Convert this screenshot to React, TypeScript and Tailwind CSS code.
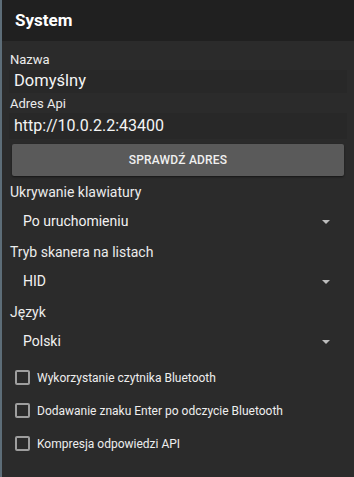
function Select({ value }: { value: string }) {
  return (
    <div className="flex h-[32px] items-center justify-between pl-[14px] pr-[17px] text-[14px] text-[#f2f2f2]">
      <span>{value}</span>
      <svg width="8" height="4" viewBox="0 0 8 4" className="mt-[1px]">
        <path d="M0 0 L8 0 L4 4 Z" fill="#bdbdbd" />
      </svg>
    </div>
  );
}

function Check({ label }: { label: string }) {
  return (
    <div className="flex h-[33px] items-center gap-[7px] pl-[13px] text-[12px] text-[#eeeeee]">
      <div className="h-[15px] w-[15px] rounded-[2px] border-2 border-[#9e9e9e]" />
      <span>{label}</span>
    </div>
  );
}

export default function App() {
  return (
    <div
      className="flex h-[477px] w-[354px] flex-col border-l-2 border-[#5d6d78] bg-[#2b2b2b]"
      style={{ fontFamily: 'Roboto, "Liberation Sans", sans-serif' }}
    >
      {/* header */}
      <div className="flex h-[41px] shrink-0 items-center bg-[#202020] pl-[13px]">
        <span className="text-[17px] font-bold text-white">System</span>
      </div>

      <div className="flex flex-col px-[7px] pt-[9px]">
        <label className="h-[20px] pl-[1px] text-[13px] leading-[20px] text-[#ececec]">Nazwa</label>
        <div className="flex h-[23px] items-center bg-[#282828] pl-[5px] text-[16.5px] text-[#f4f4f4]">Domyślny</div>
        <label className="mt-[1px] h-[19px] pl-[1px] text-[13px] leading-[19px] text-[#ececec]">Adres Api</label>
        <div className="flex h-[26px] items-center bg-[#282828] pl-[5px] text-[16px] text-[#f4f4f4]">http://10.0.2.2:43400</div>

        <button
          type="button"
          className="mx-[3px] mt-[5px] h-[32px] rounded-[2px] bg-[#5a5a5a] text-[12px] font-medium tracking-[0.2px] text-[#f0f0f0] shadow-[0_1px_2px_rgba(0,0,0,0.5)]"
        >
          SPRAWDŹ ADRES
        </button>

        <div className="mt-[3px] flex flex-col">
          <label className="h-[26px] pl-[1px] text-[14px] leading-[26px] text-[#ececec]">Ukrywanie klawiatury</label>
          <Select value="Po uruchomieniu" />
          <label className="mt-[2px] h-[26px] pl-[1px] text-[14px] leading-[26px] text-[#ececec]">Tryb skanera na listach</label>
          <Select value="HID" />
          <label className="mt-[2px] h-[26px] pl-[1px] text-[14px] leading-[26px] text-[#ececec]">Język</label>
          <Select value="Polski" />
        </div>
      </div>

      <div className="mt-[4px] flex flex-col">
        <Check label="Wykorzystanie czytnika Bluetooth" />
        <Check label="Dodawanie znaku Enter po odczycie Bluetooth" />
        <Check label="Kompresja odpowiedzi API" />
      </div>
    </div>
  );
}
